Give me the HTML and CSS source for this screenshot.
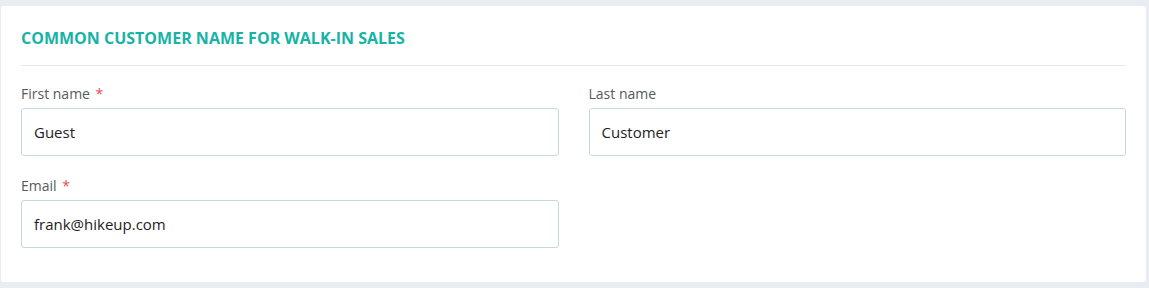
FILE: index.html
```html
<!DOCTYPE html>
<html>
<head>
<meta charset="utf-8">
<link rel="stylesheet" href="styles.css">
</head>
<body>
<div class="page">
  <section class="card">
    <h2 class="card-title">Common customer name for walk-in sales</h2>
    <div class="form-grid">
      <div class="field">
        <label class="field-label">First name <span class="req">*</span></label>
        <div class="input">Guest</div>
      </div>
      <div class="field">
        <label class="field-label">Last name</label>
        <div class="input">Customer</div>
      </div>
      <div class="field">
        <label class="field-label">Email <span class="req">*</span></label>
        <div class="input">frank@hikeup.com</div>
      </div>
    </div>
  </section>
</div>
</body>
</html>
```
FILE: styles.css
```css
html, body {
  margin: 0;
  padding: 0;
  background: #e9ecf0;
  font-family: "Open Sans", "Liberation Sans", sans-serif;
}
.page {
  padding: 6px 3px 6px 1px;
}
.card {
  background: #ffffff;
  border-radius: 3px;
  padding: 21px 20px 34px 20px;
}
.card-title {
  margin: 0;
  font-size: 16px;
  line-height: 22px;
  font-weight: 700;
  text-transform: uppercase;
  color: #17b3a6;
  padding-bottom: 16px;
  border-bottom: 1px solid #e8ebee;
}
.form-grid {
  display: grid;
  grid-template-columns: 1fr 1fr;
  column-gap: 30px;
  row-gap: 20px;
  padding-top: 18px;
}
.field {
  display: flex;
  flex-direction: column;
}
.field-label {
  font-size: 14px;
  line-height: 19px;
  color: #555a5e;
  margin-bottom: 5px;
}
.req {
  color: #ea4c52;
  margin-left: 2px;
}
.input {
  box-sizing: border-box;
  height: 48px;
  border: 1px solid #c5dadb;
  border-radius: 3px;
  padding: 0 12px;
  display: flex;
  align-items: center;
  font-size: 15px;
  color: #1e2124;
}
```
